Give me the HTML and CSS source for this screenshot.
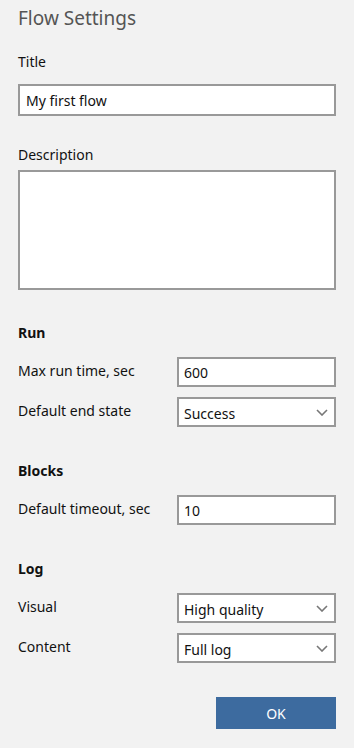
FILE: index.html
```html
<!DOCTYPE html>
<html lang="en">
<head>
    <meta charset="UTF-8">
    <meta name="viewport" content="width=device-width, initial-scale=1.0">
    <title>Flow Settings</title>
    <link rel="stylesheet" href="styles.css">
</head>
<body>
    <div class="panel">
        <h1>Flow Settings</h1>

        <label class="field-label" for="title">Title</label>
        <input type="text" id="title" class="box" value="My first flow">

        <label class="field-label desc-label" for="description">Description</label>
        <textarea id="description" class="box area"></textarea>

        <h2>Run</h2>
        <div class="row">
            <label for="maxRun">Max run time, sec</label>
            <input type="text" id="maxRun" class="box small" value="600">
        </div>
        <div class="row">
            <label for="endState">Default end state</label>
            <div class="box small select" id="endState">
                <span>Success</span>
                <svg width="12" height="7" viewBox="0 0 12 7"><path d="M1 1l5 5 5-5" fill="none" stroke="#777" stroke-width="1.6"/></svg>
            </div>
        </div>

        <h2>Blocks</h2>
        <div class="row">
            <label for="timeout">Default timeout, sec</label>
            <input type="text" id="timeout" class="box small" value="10">
        </div>

        <h2>Log</h2>
        <div class="row">
            <label>Visual</label>
            <div class="box small select">
                <span>High quality</span>
                <svg width="12" height="7" viewBox="0 0 12 7"><path d="M1 1l5 5 5-5" fill="none" stroke="#777" stroke-width="1.6"/></svg>
            </div>
        </div>
        <div class="row">
            <label>Content</label>
            <div class="box small select">
                <span>Full log</span>
                <svg width="12" height="7" viewBox="0 0 12 7"><path d="M1 1l5 5 5-5" fill="none" stroke="#777" stroke-width="1.6"/></svg>
            </div>
        </div>

        <div class="actions">
            <button>OK</button>
        </div>
    </div>
</body>
</html>
```

FILE: styles.css
```css
body {
    margin: 0;
    background-color: #f2f2f2;
    font-family: "Noto Sans", "Open Sans", sans-serif;
    font-size: 14px;
    color: #111;
}
.panel {
    padding: 0 18px;
    display: flex;
    flex-direction: column;
}
h1 {
    margin: 5px 0 0;
    font-size: 19px;
    font-weight: normal;
    color: #555;
    line-height: 26px;
}
.field-label {
    display: block;
    margin-top: 22px;
    line-height: 18px;
}
.desc-label {
    margin-top: 30px;
}
.box {
    box-sizing: border-box;
    border: 2px solid #999;
    background: #fff;
    font-family: inherit;
    font-size: 14px;
    color: #111;
    outline: none;
    margin: 0;
}
#title {
    margin-top: 13px;
    height: 32px;
    width: 318px;
    padding: 0 6px;
}
.area {
    margin-top: 6px;
    height: 120px;
    width: 318px;
    resize: none;
    display: block;
}
h2 {
    margin: 35px 0 0;
    font-size: 14px;
    font-weight: bold;
    line-height: 18px;
}
.area + h2 {
    margin-top: 34px;
}
.row {
    display: flex;
    align-items: center;
    justify-content: space-between;
    margin-top: 10px;
}
h2 + .row {
    margin-top: 15px;
}
.row label {
    line-height: 18px;
    padding-bottom: 2px;
}
.small {
    width: 159px;
    height: 30px;
    padding: 0 5px;
}
.select {
    display: flex;
    align-items: center;
    justify-content: space-between;
    padding: 0 6px 0 5px;
}
.select span {
    padding-top: 2px;
}
.actions {
    display: flex;
    justify-content: flex-end;
    margin-top: 34px;
}
button {
    width: 120px;
    height: 32px;
    background-color: #3d6b9f;
    color: #fff;
    border: none;
    font-family: inherit;
    font-size: 14px;
    cursor: pointer;
}
```
